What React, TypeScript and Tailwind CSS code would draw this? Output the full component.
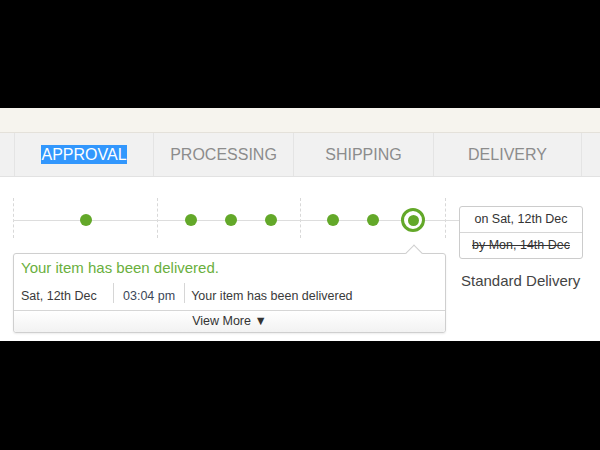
import React from "react";

const tabs = [
  { label: "APPROVAL", w: "w-[139px]", active: true },
  { label: "PROCESSING", w: "w-[140px]", active: false },
  { label: "SHIPPING", w: "w-[140px]", active: false },
  { label: "DELIVERY", w: "w-[149px]", active: false },
];

const Dot = () => (
  <div className="relative w-[24px] flex justify-center">
    <span className="w-[12px] h-[12px] rounded-full bg-[#63a829]" />
  </div>
);

const Ring = () => (
  <div className="relative w-[24px] flex justify-center">
    <span className="w-[24px] h-[24px] rounded-full border-[3px] border-[#63a829] bg-white flex items-center justify-center">
      <span className="w-[11px] h-[11px] rounded-full bg-[#63a829]" />
    </span>
  </div>
);

const App = () => {
  return (
    <div
      className="w-[600px] h-[450px] bg-black flex flex-col"
      style={{ fontFamily: '"Liberation Sans", Arial, sans-serif' }}
    >
      <div className="h-[108px]" />
      <div className="h-[233px] bg-white flex flex-col">
        {/* top strip */}
        <div className="h-[25px] bg-[#f6f4ee] border-b border-[#e4e1da]" />

        {/* tabs */}
        <div className="h-[44px] bg-[#f1f1f1] border-b border-[#e2e2e2] flex pl-[14px]">
          {tabs.map((t, i) => (
            <div
              key={t.label}
              className={`${t.w} border-l border-[#e4e4e4] flex items-center justify-center text-[16px] ${
                i === tabs.length - 1 ? "border-r" : ""
              }`}
            >
              {t.active ? (
                <span className="bg-[#3297fd] text-white leading-[19px]">{t.label}</span>
              ) : (
                <span className="text-[#8c8c8c]">{t.label}</span>
              )}
            </div>
          ))}
        </div>

        {/* content */}
        <div className="flex pl-[13px] pt-[21px]">
          <div className="w-[433px] flex flex-col">
            {/* timeline */}
            <div className="relative h-[40px] flex">
              <div className="absolute top-[22px] left-0 right-[-13px] h-px bg-[#dddddd]" />
              <div className="w-[144px] border-l border-dashed border-[#d8d8d8] flex items-center justify-center pt-[4px]">
                <Dot />
              </div>
              <div className="w-[143px] border-l border-dashed border-[#d8d8d8] flex items-center justify-center gap-[16px] pt-[4px] pl-[3px]">
                <Dot />
                <Dot />
                <Dot />
              </div>
              <div className="flex-1 border-x border-dashed border-[#d8d8d8] flex items-center justify-center gap-[16px] pt-[4px]">
                <Dot />
                <Dot />
                <Ring />
              </div>
            </div>

            {/* status popover */}
            <div className="relative mt-[15px] border border-[#cfcfcf] rounded-[3px] shadow-[0_1px_2px_rgba(0,0,0,0.08)]">
              <span className="absolute -top-[7px] left-[394px] w-[12px] h-[12px] bg-white border-l border-t border-[#cfcfcf] rotate-45" />
              <div className="relative px-[7px] pt-[5px] text-[15px] leading-[18px] text-[#6aaf3d]">
                Your item has been delivered.
              </div>
              <div className="flex mt-[6px] pb-[7px] pl-[7px] text-[12.5px] leading-[14px] text-[#3a3a3a] border-b border-[#d6d6d6]">
                <div className="w-[93px] h-[20px] pt-[6px] border-r border-[#d6d6d6]">
                  Sat, 12th Dec
                </div>
                <div className="h-[20px] pt-[6px] px-[9px] border-r border-[#d6d6d6] text-[#3b4658]">
                  03:04 pm
                </div>
                <div className="h-[20px] pt-[6px] pl-[6px]">
                  Your item has been delivered
                </div>
              </div>
              <div className="h-[21px] flex items-center justify-center text-[12.5px] text-[#333] bg-gradient-to-b from-white to-[#f2f2f2] rounded-b-[3px]">
                View More ▼
              </div>
            </div>
          </div>

          {/* promise box */}
          <div className="ml-[13px] w-[124px] pt-[8px] flex flex-col">
            <div className="border border-[#cccccc] rounded-[3px] text-[12.5px] text-[#333]">
              <div className="h-[26px] flex items-center justify-center border-b border-[#d6d6d6]">
                on Sat, 12th Dec
              </div>
              <div className="h-[25px] flex items-center justify-center line-through">
                by Mon, 14th Dec
              </div>
            </div>
            <div className="mt-[11px] pl-[2px] text-[15px] text-[#444] whitespace-nowrap">Standard Delivery</div>
          </div>
        </div>
      </div>
    </div>
  );
};

export default App;
